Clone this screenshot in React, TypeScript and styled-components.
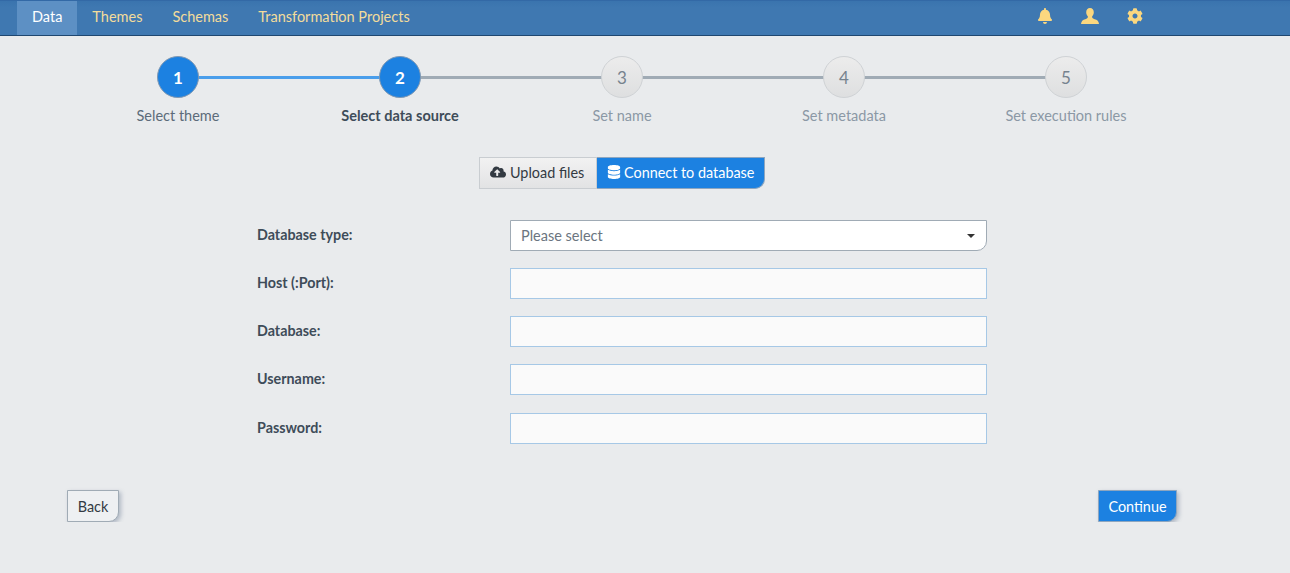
import React from "react";
import styled, { createGlobalStyle } from "styled-components";
import { FaBell, FaCog, FaCloudUploadAlt, FaDatabase } from "react-icons/fa";

const GlobalStyle = createGlobalStyle`
  html, body {
    margin: 0;
    padding: 0;
    background: #e9ebed;
  }
  body {
    font-family: "Lato", "Open Sans", sans-serif;
    font-size: 15px;
    color: #3e4c59;
  }
`;

const NavBar = styled.nav`
  display: flex;
  justify-content: space-between;
  box-sizing: content-box;
  height: 34px;
  padding: 0 147px 0 17px;
  background: linear-gradient(#3a74ae, #3f78b1 20%, #3f78b1);
  border-top: 1px solid #3369a6;
  border-bottom: 1px solid #1f4770;
`;

const NavTabs = styled.div`
  display: flex;
`;

const NavTab = styled.a<{ $active?: boolean }>`
  display: flex;
  align-items: center;
  padding: 0 15px 3px;
  color: ${(p) => (p.$active ? "#ffffff" : "#f3dc9b")};
  background: ${(p) => (p.$active ? "#5d90c4" : "transparent")};
  font-size: 14.5px;
`;

const NavIcons = styled.div`
  display: flex;
  align-items: center;
  gap: 29px;
  color: #fbd77f;
  font-size: 16px;
  padding-bottom: 4px;
`;

const UserIcon = styled.svg`
  width: 18px;
  height: 16px;
  margin: 0 -1px;
  fill: currentColor;
`;

const Page = styled.main`
  width: 1110px;
  margin-left: 67px;
`;

const Steps = styled.ol`
  display: grid;
  grid-template-columns: repeat(5, 222px);
  margin: 0;
  padding: 20px 0 0;
  list-style: none;
`;

const Step = styled.li<{ $done: boolean; $current?: boolean; $last?: boolean }>`
  position: relative;
  display: flex;
  flex-direction: column;
  align-items: center;
  gap: 9px;
  color: ${(p) => (p.$current ? "#3e4c59" : p.$done ? "#5c6b7a" : "#8b98a5")};
  font-weight: ${(p) => (p.$current ? 700 : 400)};
  font-size: 14.5px;

  &::after {
    content: "";
    display: ${(p) => (p.$last ? "none" : "block")};
    position: absolute;
    top: 20px;
    left: 50%;
    width: 222px;
    height: 3px;
    background: ${(p) => (p.$done && !p.$current ? "#4a9eeb" : "#a0abb5")};
  }
`;

const StepCircle = styled.span<{ $done: boolean }>`
  position: relative;
  z-index: 1;
  display: flex;
  align-items: center;
  justify-content: center;
  box-sizing: border-box;
  width: 42px;
  height: 42px;
  border-radius: 50%;
  font-size: 17px;
  font-weight: ${(p) => (p.$done ? 700 : 400)};
  color: ${(p) => (p.$done ? "#ffffff" : "#76828e")};
  background: ${(p) => (p.$done ? "#1c81e1" : "linear-gradient(#ececec, #dedfe0)")};
  border: ${(p) => (p.$done ? "1px solid #7f98b3" : "1px solid #cfd2d5")};
`;

const SourceToggle = styled.div`
  display: flex;
  justify-content: flex-start;
  margin: 33px 0 0 412px;
`;

const ToggleButton = styled.button<{ $active?: boolean }>`
  display: flex;
  align-items: center;
  gap: ${(p) => (p.$active ? "3px" : "4px")};
  box-sizing: border-box;
  width: ${(p) => (p.$active ? "168px" : "118px")};
  height: 32px;
  padding: 0 0 2px 10px;
  font-family: inherit;
  font-size: 14.4px;
  color: ${(p) => (p.$active ? "#ffffff" : "#333a42")};
  background: ${(p) => (p.$active ? "#1c81e1" : "linear-gradient(#f2f2f2, #e2e3e4)")};
  border: 1px solid ${(p) => (p.$active ? "#8ea6bf" : "#c9cdd1")};
  border-width: ${(p) => (p.$active ? "1px 1px 1px 0" : "1px")};
  border-bottom-right-radius: ${(p) => (p.$active ? "10px" : "0")};

  svg {
    font-size: ${(p) => (p.$active ? "14px" : "16px")};
  }
`;

const Form = styled.form`
  display: flex;
  flex-direction: column;
  gap: 17px;
  margin: 31px 0 0 190px;
  width: 730px;
`;

const Row = styled.div`
  display: grid;
  grid-template-columns: 253px 477px;
  align-items: center;

  &:last-child {
    margin-top: 1px;
  }
`;

const Label = styled.label`
  padding-bottom: 2px;
  font-weight: 700;
  font-size: 14.3px;
  color: #3e4c59;
`;

const Select = styled.div`
  display: flex;
  align-items: center;
  justify-content: space-between;
  box-sizing: border-box;
  height: 31px;
  padding: 0 11px 0 10px;
  background: #ffffff;
  border: 1px solid #a0abb5;
  border-bottom-right-radius: 10px;
  color: #6b7580;
  font-size: 14.5px;
`;

const Caret = styled.span`
  width: 0;
  height: 0;
  border-left: 4px solid transparent;
  border-right: 4px solid transparent;
  border-top: 4px solid #333;
`;

const Input = styled.input`
  box-sizing: border-box;
  height: 31px;
  width: 100%;
  background: #fafafa;
  border: 1px solid #a6c8e6;
  outline: none;
`;

const Footer = styled.div`
  display: flex;
  justify-content: space-between;
  margin-top: 46px;
`;

const ActionButton = styled.button<{ $primary?: boolean }>`
  box-sizing: border-box;
  width: ${(p) => (p.$primary ? "79px" : "52px")};
  height: 32px;
  padding: 0;
  font-family: inherit;
  font-size: 14.4px;
  color: ${(p) => (p.$primary ? "#ffffff" : "#333a42")};
  background: ${(p) => (p.$primary ? "#1c81e1" : "#eef0f2")};
  border: 1px solid ${(p) => (p.$primary ? "#8ea6bf" : "#a0abb5")};
  border-bottom-right-radius: 10px;
  box-shadow: 2px 2px 4px rgba(70, 90, 120, 0.35);
`;

const tabs = ["Data", "Themes", "Schemas", "Transformation Projects"];
const steps = ["Select theme", "Select data source", "Set name", "Set metadata", "Set execution rules"];
const fields = ["Host (:Port):", "Database:", "Username:", "Password:"];

const App: React.FC = () => {
  return (
    <>
      <GlobalStyle />
      <NavBar>
        <NavTabs>
          {tabs.map((t, i) => (
            <NavTab key={t} $active={i === 0}>{t}</NavTab>
          ))}
        </NavTabs>
        <NavIcons>
          <FaBell />
          <UserIcon viewBox="0 0 18 16">
            <path d="M9 0C6.6 0 5.2 1.9 5.2 4.2c0 1.7.7 3.2 1.6 4.1.2.9 0 1.6-.9 2.1C4 11.3 1 11.9.4 14.2L0 16h18l-.4-1.8c-.6-2.3-3.6-2.9-5.5-3.8-.9-.5-1.1-1.2-.9-2.1.9-.9 1.6-2.4 1.6-4.1C12.8 1.9 11.4 0 9 0z" />
          </UserIcon>
          <FaCog />
        </NavIcons>
      </NavBar>

      <Page>
        <Steps>
          {steps.map((s, i) => (
            <Step key={s} $done={i < 2} $current={i === 1} $last={i === steps.length - 1}>
              <StepCircle $done={i < 2}>{i + 1}</StepCircle>
              {s}
            </Step>
          ))}
        </Steps>

        <SourceToggle>
          <ToggleButton>
            <FaCloudUploadAlt />
            Upload files
          </ToggleButton>
          <ToggleButton $active>
            <FaDatabase />
            Connect to database
          </ToggleButton>
        </SourceToggle>

        <Form>
          <Row>
            <Label>Database type:</Label>
            <Select>
              Please select
              <Caret />
            </Select>
          </Row>
          {fields.map((f) => (
            <Row key={f}>
              <Label>{f}</Label>
              <Input type={f === "Password:" ? "password" : "text"} />
            </Row>
          ))}
        </Form>

        <Footer>
          <ActionButton type="button">Back</ActionButton>
          <ActionButton type="button" $primary>Continue</ActionButton>
        </Footer>
      </Page>
    </>
  );
};

export default App;
